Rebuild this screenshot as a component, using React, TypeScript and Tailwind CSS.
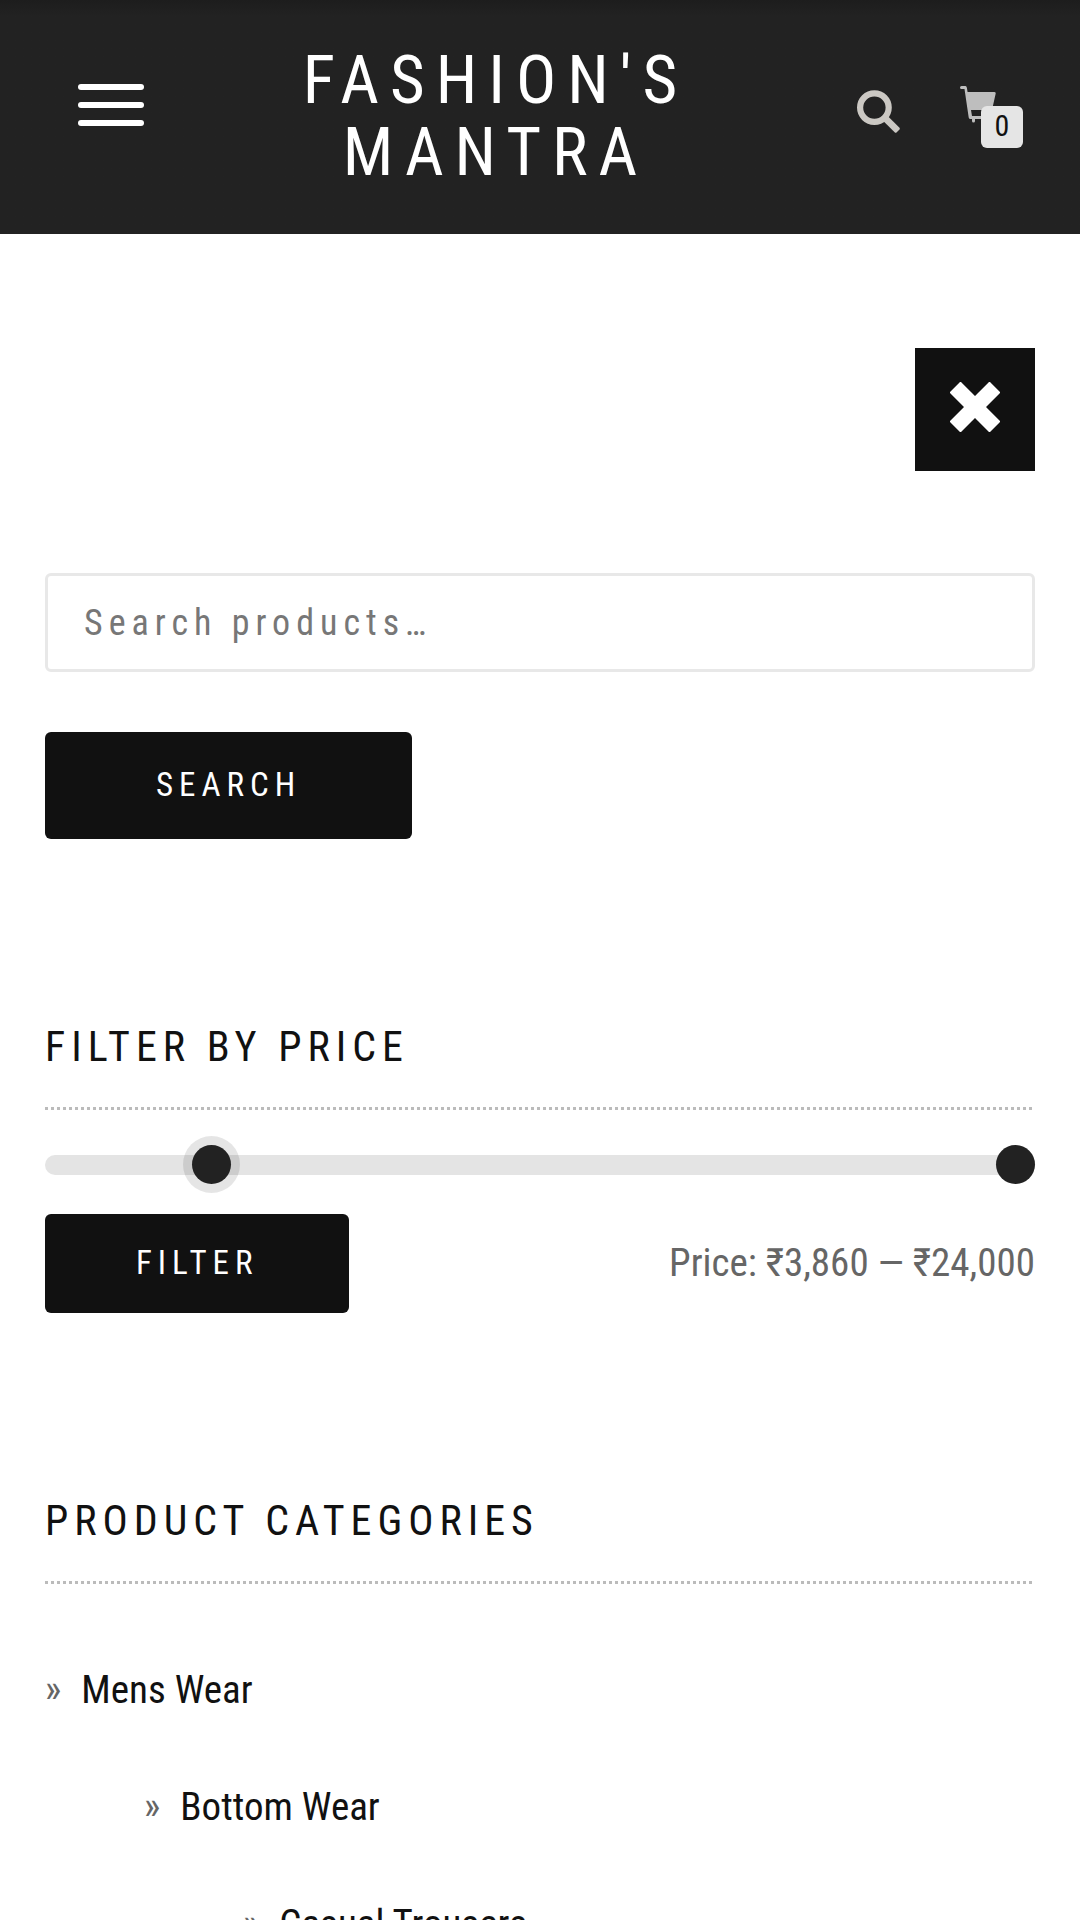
import { useState } from "react";

const categories = [
  { name: "Mens Wear", indent: "pl-0" },
  { name: "Bottom Wear", indent: "pl-[99px]" },
  { name: "Casual Trousers", indent: "pl-[198px]" },
];

const MIN_PRICE = 180;
const MAX_PRICE = 24000;

const formatPrice = (value: number) => `₹${value.toLocaleString("en-US")}`;

export default function App() {
  return (
    <div className="h-screen overflow-hidden bg-white font-['Roboto_Condensed',Roboto,sans-serif] text-[#666]">
      <Header />
      <aside className="flex flex-col px-[45px] pt-[114px]">
        <button
          type="button"
          aria-label="Close"
          className="flex h-[123px] w-[120px] items-center justify-center self-end bg-[#111] pb-1.5 text-white"
        >
          <CloseIcon />
        </button>
        <ProductSearch />
        <PriceFilter />
        <ProductCategories />
      </aside>
    </div>
  );
}

function Header() {
  return (
    <header className="flex h-[234px] items-start bg-[#222] bg-linear-to-b from-[#1d1d1d] to-[#222] to-[16px] pr-[57px] pl-[78px]">
      <button
        type="button"
        aria-label="Menu"
        className="mt-[84px] flex w-[66px] flex-col gap-3"
      >
        <span className="h-1.5 w-full rounded-full bg-white" />
        <span className="h-1.5 w-full rounded-full bg-white" />
        <span className="h-1.5 w-full rounded-full bg-white" />
      </button>
      <a
        href="#"
        className="mt-11 flex-1 pr-2.5 text-center text-[67px] leading-[72px] tracking-[11px] text-white uppercase"
      >
        Fashion's
        <br />
        Mantra
      </a>
      <button type="button" aria-label="Search" className="mt-[90px] text-[#cbc8c3]">
        <SearchIcon />
      </button>
      <a
        href="#"
        aria-label="Cart"
        className="relative mt-[86px] ml-[60px] block h-[62px] w-[63px] text-[#bebebe]"
      >
        <CartIcon />
        <span className="absolute right-0 bottom-0 flex size-[42px] items-center justify-center rounded-md bg-[#e5e5e5] pb-0.5 text-[30px] leading-none text-[#111]">
          0
        </span>
      </a>
    </header>
  );
}

function ProductSearch() {
  return (
    <form className="mt-[102px] flex flex-col items-start" onSubmit={(e) => e.preventDefault()}>
      <input
        type="search"
        aria-label="Search products"
        placeholder="Search products…"
        className="h-[99px] w-full rounded-md border-3 border-[#e8e8e8] bg-transparent px-9 text-[36px] tracking-[6px] text-[#111] outline-none placeholder:text-[#777]"
      />
      <button
        type="submit"
        className="mt-[60px] h-[107px] rounded-md bg-[#111] px-[111px] pb-0.5 text-[33px] tracking-[6px] text-white uppercase"
      >
        Search
      </button>
    </form>
  );
}

function WidgetTitle({ children }: { children: string }) {
  return (
    <>
      <h3 className="text-[42px] leading-[60px] tracking-[6px] text-[#111] uppercase">
        {children}
      </h3>
      <div className="mt-[30px] h-[3px] bg-[repeating-linear-gradient(90deg,#bbb_0_3px,transparent_3px_6px)]" />
    </>
  );
}

function PriceFilter() {
  const [low, setLow] = useState(3860);
  const [high, setHigh] = useState(MAX_PRICE);

  const rangeClass =
    "pointer-events-none absolute inset-0 w-full appearance-none bg-transparent outline-none [&::-webkit-slider-thumb]:pointer-events-auto [&::-webkit-slider-thumb]:size-[39px] [&::-webkit-slider-thumb]:appearance-none [&::-webkit-slider-thumb]:rounded-full [&::-webkit-slider-thumb]:bg-[#222]";

  return (
    <section className="mt-[178px]">
      <WidgetTitle>Filter by price</WidgetTitle>
      <div className="relative mt-[35px] flex h-[39px] items-center">
        <div className="h-5 w-full rounded-full bg-[#e4e4e4]" />
        <input
          type="range"
          aria-label="Minimum price"
          min={MIN_PRICE}
          max={MAX_PRICE}
          step={20}
          value={low}
          onChange={(e) => setLow(Math.min(Number(e.target.value), high))}
          className={`${rangeClass} [&::-webkit-slider-thumb]:shadow-[0_0_0_9px_rgba(0,0,0,0.1)]`}
        />
        <input
          type="range"
          aria-label="Maximum price"
          min={MIN_PRICE}
          max={MAX_PRICE}
          step={20}
          value={high}
          onChange={(e) => setHigh(Math.max(Number(e.target.value), low))}
          className={rangeClass}
        />
      </div>
      <div className="mt-[30px] flex items-center justify-between">
        <button
          type="button"
          className="h-[99px] rounded-md bg-[#111] px-[91px] pb-0.5 text-[33px] tracking-[6px] text-white uppercase"
        >
          Filter
        </button>
        <p className="pb-0.5 text-[39px] leading-[60px]">
          Price: {formatPrice(low)} — {formatPrice(high)}
        </p>
      </div>
    </section>
  );
}

function ProductCategories() {
  return (
    <section className="mt-[178px]">
      <WidgetTitle>Product Categories</WidgetTitle>
      <ul className="mt-[47px]">
        {categories.map((category) => (
          <li
            key={category.name}
            className={`flex h-[117px] items-center gap-5 text-[39px] leading-[60px] ${category.indent}`}
          >
            <span aria-hidden="true" className="pb-0.5">
              »
            </span>
            <a href="#" className="text-[#111]">
              {category.name}
            </a>
          </li>
        ))}
      </ul>
    </section>
  );
}

function CloseIcon() {
  return (
    <svg width="50" height="50" viewBox="0 0 50 50" fill="currentColor">
      <path d="M10 0h1l14 14L39 0h1l10 10v1L36 25l14 14v1L40 50h-1L25 36 11 50h-1L0 40v-1l14-14L0 11v-1z" />
    </svg>
  );
}

function SearchIcon() {
  return (
    <svg width="43" height="43" viewBox="0 0 43 43">
      <circle cx="17.4" cy="17.6" r="14.3" fill="none" stroke="currentColor" strokeWidth="6.2" />
      <rect
        x="40"
        y="-3.3"
        width="18"
        height="6.6"
        rx="1.5"
        transform="rotate(45)"
        fill="currentColor"
      />
    </svg>
  );
}

function CartIcon() {
  return (
    <svg width="36" height="37" viewBox="0 0 36 37" fill="currentColor">
      <path d="M1.5 0H5.5Q6.6 0 6.8 1.5L7.6 6H34.5Q36 6 35.7 7.500L32 24H11L12 30H32V33H15V35A1.5 1.5 0 0 1 12 35V33H10.5Q9 33 8.700 31.500L4.500 3H1.500A1.500 1.500 0 0 1 1.500 0Z" />
    </svg>
  );
}
